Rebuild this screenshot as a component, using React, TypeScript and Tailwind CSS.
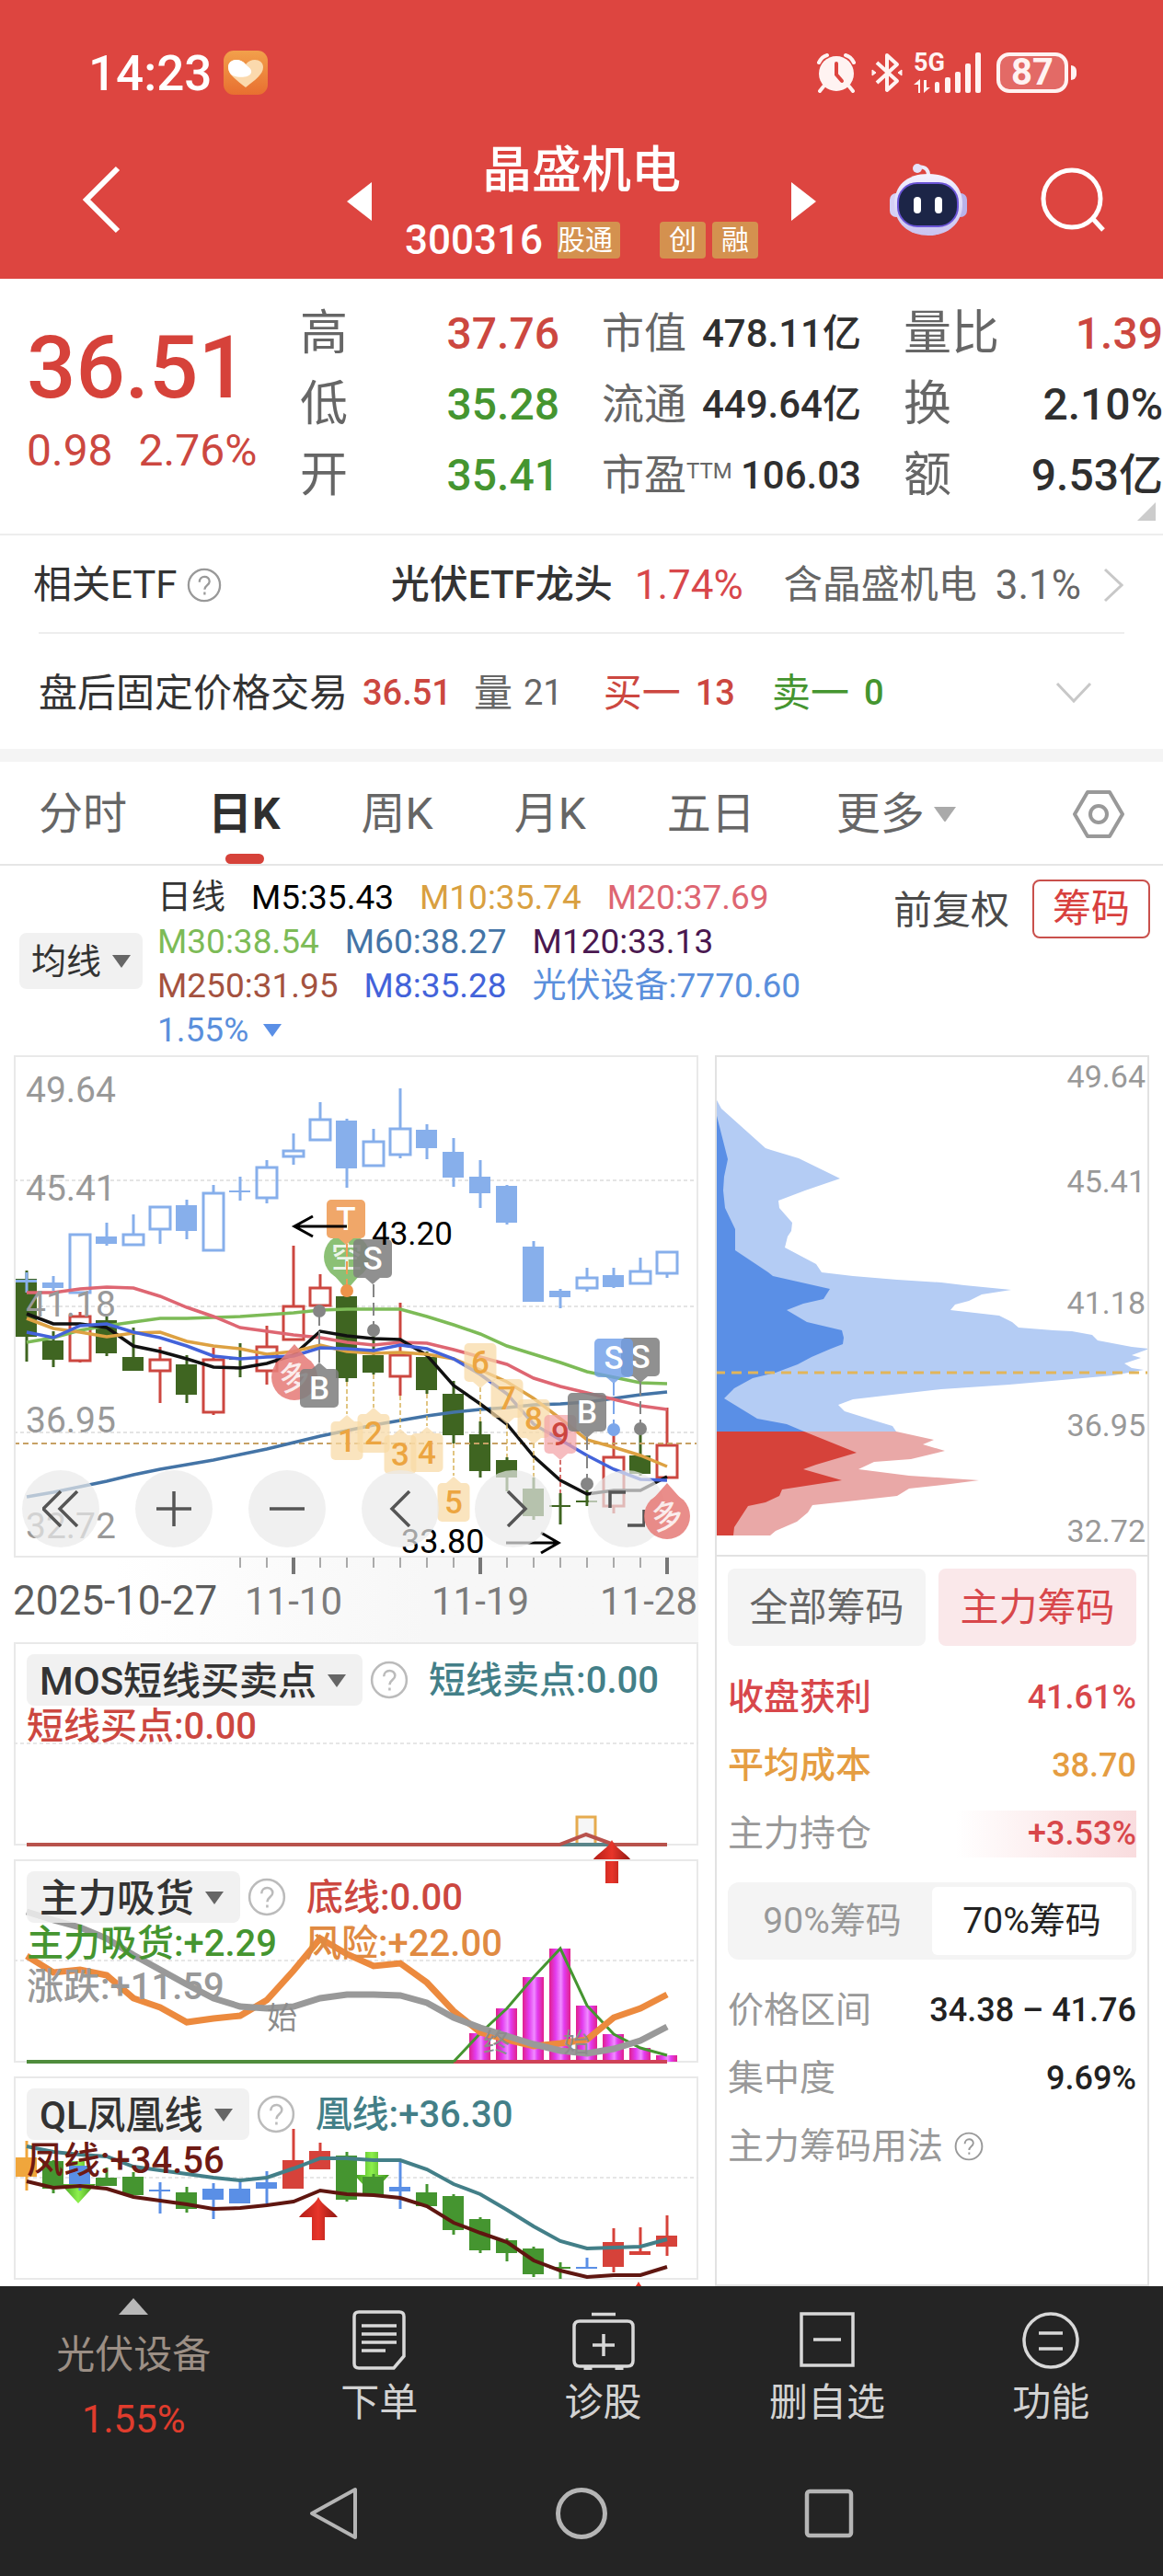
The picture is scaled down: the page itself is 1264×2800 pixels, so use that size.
import type { ReactNode } from "react";

const RED = "#cc4740";
const GREEN = "#459530";
const FONT = "Roboto, 'Noto Sans CJK SC', sans-serif";

// high, body top, body bottom, low, style
type Candle = [number, number, number, number, string];

const STEP = 29;
const xAt = (i: number) => 14 + STEP * i;
const toPoints = (ys: number[], from = 0) => ys.map((y, i) => `${xAt(i + from)},${y}`).join(" ");

const sectorCandles: Candle[] = [
  [236, 244, 247, 258, "fill"],
  [240, 247, 253, 256, "fill"],
  [195, 195, 258, 258, "open"],
  [182, 197, 205, 207, "fill"],
  [173, 195, 206, 206, "open"],
  [165, 165, 189, 205, "open"],
  [157, 163, 191, 200, "fill"],
  [141, 150, 212, 212, "open"],
  [132, 147, 149, 158, "fill"],
  [114, 122, 155, 161, "open"],
  [85, 104, 110, 119, "open"],
  [51, 70, 92, 93, "open"],
  [69, 71, 123, 144, "fill"],
  [80, 94, 120, 120, "open"],
  [36, 80, 108, 112, "open"],
  [75, 81, 101, 113, "fill"],
  [90, 105, 133, 143, "fill"],
  [114, 132, 150, 166, "fill"],
  [141, 142, 182, 184, "fill"],
  [202, 208, 268, 268, "fill"],
  [254, 256, 263, 275, "fill"],
  [231, 242, 253, 257, "open"],
  [231, 239, 252, 253, "fill"],
  [220, 235, 248, 248, "open"],
  [213, 214, 237, 242, "open"],
];

const priceCandles: Candle[] = [
  [234, 243, 306, 333, "down"],
  [300, 310, 331, 339, "down"],
  [279, 284, 332, 334, "up"],
  [284, 288, 324, 327, "down"],
  [296, 328, 343, 343, "down"],
  [317, 331, 343, 378, "up"],
  [326, 336, 369, 378, "down"],
  [318, 331, 388, 391, "up"],
  [313, 329, 331, 350, "down"],
  [294, 317, 343, 358, "up"],
  [207, 273, 309, 310, "up"],
  [238, 253, 272, 273, "up"],
  [256, 262, 351, 355, "down"],
  [299, 326, 345, 347, "down"],
  [269, 326, 349, 370, "up"],
  [322, 328, 364, 368, "down"],
  [354, 368, 413, 422, "down"],
  [398, 412, 452, 459, "down"],
  [437, 440, 459, 474, "down"],
  [459, 471, 501, 505, "down"],
  [476, 489, 491, 510, "down"],
  [467, 484, 486, 490, "down"],
  [408, 437, 490, 498, "up"],
  [406, 435, 455, 457, "down"],
  [383, 424, 459, 460, "up"],
];

const phoenixCandles: Candle[] = [
  [70, 88, 109, 124, "#f0a63c"],
  [91, 92, 122, 127, GREEN],
  [97, 97, 117, 124, "#5a8fe6"],
  [99, 110, 119, 119, GREEN],
  [104, 109, 129, 129, GREEN],
  [115, 123, 125, 149, "#5a8fe6"],
  [120, 126, 144, 148, GREEN],
  [116, 122, 134, 155, "#5a8fe6"],
  [114, 122, 138, 138, "#5a8fe6"],
  [103, 115, 122, 139, "#5a8fe6"],
  [57, 91, 122, 122, "#d6423a"],
  [72, 81, 101, 101, "#d6423a"],
  [82, 86, 134, 136, GREEN],
  [106, 109, 129, 129, GREEN],
  [91, 120, 125, 144, "#5a8fe6"],
  [117, 126, 141, 141, GREEN],
  [128, 130, 167, 172, GREEN],
  [153, 155, 189, 192, GREEN],
  [176, 178, 192, 201, GREEN],
  [185, 187, 215, 218, GREEN],
  [202, 207, 209, 220, GREEN],
  [197, 207, 209, 209, "#5a8fe6"],
  [165, 180, 207, 213, "#d6423a"],
  [164, 190, 194, 194, "#d6423a"],
  [151, 173, 185, 195, "#d6423a"],
];

const averages = [
  { color: "#4474a6", ys: [480, 475, 469, 463, 456, 450, 445, 440, 434, 428, 421, 414, 408, 402, 397, 392, 388, 385, 383, 380, 379, 377, 373, 369, 366] },
  { color: "#7dbb57", ys: [312, 307, 299, 294, 290, 286, 286, 285, 284, 282, 280, 277, 276, 276, 276, 284, 293, 303, 316, 325, 334, 344, 350, 356, 357] },
  { color: "#de6672", ys: [258, 258, 254, 252, 253, 262, 274, 284, 296, 300, 304, 307, 312, 315, 312, 313, 320, 328, 336, 351, 360, 367, 374, 381, 385] },
  { color: "#111111", ys: [281, 292, 292, 296, 316, 322, 330, 339, 340, 335, 326, 300, 305, 308, 309, 326, 359, 379, 401, 436, 462, 477, 473, 473, 458] },
  { color: "#dda142", ys: [286, 297, 301, 306, 302, 301, 311, 316, 319, 325, 322, 315, 322, 324, 323, 325, 330, 342, 355, 373, 395, 418, 426, 435, 447] },
  { color: "#4363da", ys: [301, 307, 294, 292, 301, 307, 316, 327, 330, 328, 327, 318, 319, 321, 315, 319, 330, 347, 368, 401, 418, 435, 450, 461, 462] },
];

const trend = [57, 66, 74, 86, 104, 120, 136, 151, 160, 162, 160, 151, 147, 147, 148, 156, 172, 183, 192, 201, 208, 211, 206, 197, 182];
const risk = [105, 123, 120, 126, 151, 161, 177, 173, 170, 153, 121, 86, 103, 116, 113, 134, 165, 188, 196, 203, 200, 196, 172, 162, 147];
const absorb = [189, 162, 128, 97, 159, 190, 205, 213];

const upperLine = [76, 82, 85, 87, 98, 102, 106, 110, 113, 110, 100, 89, 89, 91, 91, 101, 117, 128, 145, 163, 179, 187, 186, 185, 177];
const lowerLine = [114, 121, 119, 122, 131, 135, 139, 144, 143, 140, 136, 124, 128, 129, 132, 141, 159, 170, 180, 200, 211, 218, 216, 216, 207];

const maRows = [
  [
    { text: "日线", color: "text-[#333333]" },
    { text: "M5:35.43", color: "text-black" },
    { text: "M10:35.74", color: "text-[#d9a040]" },
    { text: "M20:37.69", color: "text-[#de6672]" },
  ],
  [
    { text: "M30:38.54", color: "text-[#7dbb57]" },
    { text: "M60:38.27", color: "text-[#4474a6]" },
    { text: "M120:33.13", color: "text-[#4a1850]" },
  ],
  [
    { text: "M250:31.95", color: "text-[#a4523f]" },
    { text: "M8:35.28", color: "text-[#4363da]" },
    { text: "光伏设备:7770.60", color: "text-[#5a8fdc]" },
  ],
];

const quotes = [
  [
    { label: "高", value: "37.76", color: "text-[#cc4740]" },
    { label: "低", value: "35.28", color: "text-[#459530]" },
    { label: "开", value: "35.41", color: "text-[#459530]" },
  ],
  [
    { label: "市值", value: "478.11亿", color: "text-[#2f2f2f]" },
    { label: "流通", value: "449.64亿", color: "text-[#2f2f2f]" },
    { label: "市盈", sup: "TTM", value: "106.03", color: "text-[#2f2f2f]" },
  ],
  [
    { label: "量比", value: "1.39", color: "text-[#cc4740]" },
    { label: "换", value: "2.10%", color: "text-[#2f2f2f]" },
    { label: "额", value: "9.53亿", color: "text-[#2f2f2f]" },
  ],
];

function Candles({ data }: { data: Candle[] }) {
  return (
    <g>
      {data.map(([high, top, bottom, low, kind], i) => {
        const x = xAt(i);
        const sector = kind === "fill" || kind === "open";
        const hollow = kind === "open" || kind === "up";
        const color = sector ? "#87afeb" : kind === "up" ? RED : kind === "down" ? "#3f6521" : kind;
        return (
          <g key={i} stroke={color} strokeWidth={3}>
            {high < top && <line x1={x} x2={x} y1={high} y2={top} />}
            {low > bottom && <line x1={x} x2={x} y1={bottom} y2={low} />}
            {hollow ? (
              <rect x={x - 11} y={top} width={22} height={bottom - top} fill="white" fillOpacity={sector ? 0 : 1} />
            ) : (
              <rect x={x - 12} y={top} width={23} height={bottom - top} fill={color} stroke="none" />
            )}
          </g>
        );
      })}
    </g>
  );
}

function Help({ className = "size-[42px] text-[#bbbbbb]" }: { className?: string }) {
  return (
    <svg viewBox="0 0 40 40" className={`shrink-0 ${className}`} fill="none" stroke="currentColor" strokeWidth={2.4}>
      <circle cx="20" cy="20" r="18" />
      <path d="M14.5 16.5c0-8 11.500-8 11.500-.8 0 4.300-5.600 4.500-5.600 9.300M20.400 28v3" />
    </svg>
  );
}

function Caret({ className = "w-5 text-[#666666]" }: { className?: string }) {
  return (
    <svg viewBox="0 0 20 14" className={`shrink-0 ${className}`} fill="currentColor">
      <path d="M0 0h20L10 14z" />
    </svg>
  );
}

// Square flag with a small pointer above or below
function Flag({ x, y, w = 42, label, fill, color = "white", up = false, size = 35 }: { x: number; y: number; w?: number; label: string; fill: string; color?: string; up?: boolean; size?: number }) {
  return (
    <g>
      <rect x={x - w / 2} y={y} width={w} height={42} rx={5} fill={fill} />
      <path d={up ? `M${x - 8} ${y}l8-7 8 7z` : `M${x - 8} ${y + 42}l8 7 8-7z`} fill={fill} />
      <text x={x} y={y + 33} fontSize={size} fontWeight={500} textAnchor="middle" fill={color}>{label}</text>
    </g>
  );
}

function Pin({ x, y, label, fill, up = false }: { x: number; y: number; label: string; fill: string; up?: boolean }) {
  return (
    <g opacity={0.88}>
      <circle cx={x} cy={y} r={25} fill={fill} />
      <path d={up ? `M${x - 15} ${y - 19}L${x} ${y - 36}l15 17z` : `M${x - 15} ${y + 19}L${x} ${y + 36}l15-17z`} fill={fill} />
      <text x={x} y={y + 12} fontSize={34} fontWeight={500} textAnchor="middle" fill="white" fillOpacity={0.85} transform={up ? `rotate(-14 ${x} ${y})` : undefined}>{label}</text>
    </g>
  );
}

function Stem({ x, from, to, dot, color }: { x: number; from: number; to: number; dot: number; color: string }) {
  return (
    <g>
      <line x1={x} x2={x} y1={from} y2={to} stroke={color} strokeWidth={2} strokeDasharray="14 6" />
      <circle cx={x} cy={dot} r={7} fill={color} />
    </g>
  );
}

function RedArrow({ x, y }: { x: number; y: number }) {
  return <path d={`M${x} ${y}c4 9 14 13 21 22h-14v25h-14v-25h-14c7-9 17-13 21-22z`} fill="url(#redArrow)" />;
}

function GreenArrow({ x, y }: { x: number; y: number }) {
  return <path d={`M${x - 7} ${y}h14v25h12L${x} ${y + 46}l-19-21h12z`} fill="url(#greenArrow)" />;
}

function ArrowDefs() {
  return (
    <defs>
      <linearGradient id="redArrow">
        <stop offset="0" stopColor="#b01c16" />
        <stop offset="0.5" stopColor="#e8352a" />
        <stop offset="1" stopColor="#8f1712" />
      </linearGradient>
      <linearGradient id="greenArrow">
        <stop offset="0" stopColor="#3c9a1c" />
        <stop offset="0.5" stopColor="#8df04c" />
        <stop offset="1" stopColor="#3a8f1b" />
      </linearGradient>
      <linearGradient id="magentaBar">
        <stop offset="0" stopColor="#e0208c" />
        <stop offset="0.3" stopColor="#e33cf0" />
        <stop offset="0.55" stopColor="#f08cff" />
        <stop offset="0.7" stopColor="#e33cf0" />
        <stop offset="1" stopColor="#e0208c" />
      </linearGradient>
    </defs>
  );
}

function StatusBar() {
  return (
    <div className="flex h-14 items-center pl-[96px] pr-[94px]">
      <span className="pt-[3px] text-[53px] font-medium">14:23</span>
      <svg viewBox="0 0 48 48" className="ml-[13px] size-12">
        <defs>
          <linearGradient id="heartBox" x2="0" y2="1">
            <stop stopColor="#f2a04b" />
            <stop offset="1" stopColor="#e86f30" />
          </linearGradient>
        </defs>
        <rect width="48" height="48" rx="11" fill="url(#heartBox)" />
        <path d="M24 40C14 32 5 26 5 18c0-9 13-11 19-3 6-8 19-6 19 3 0 8-9 14-19 22z" fill="#fbd9ad" />
        <path d="M24 15c-6-8-19-6-19 3 0 3 1 5 3 8 6 4 20 4 22-2 1-4-3-6-6-9z" fill="white" />
      </svg>
      <div className="ml-auto flex items-center">
        <svg viewBox="0 0 44 44" className="size-11">
          <g fill="none" stroke="#fff3f2" strokeWidth="4" strokeLinecap="round">
            <path d="M3 11C5 7 8 4 12 3M41 11c-2-4-5-7-9-8M8 37l-4 5M36 37l4 5" />
          </g>
          <circle cx="22" cy="23" r="19" fill="#fff3f2" />
          <path d="M22 12v12l6 7" fill="none" stroke="#dd4540" strokeWidth="4" strokeLinecap="round" />
        </svg>
        <svg viewBox="0 0 34 44" className="ml-4 w-[34px]" fill="none" stroke="#fff3f2" strokeWidth="4" strokeLinejoin="round">
          <path d="M6 11l22 20-11 10V3l11 10L6 33" />
          <path d="M1 19l4 3-4 3zM33 19l-4 3 4 3z" fill="#fff3f2" strokeWidth="1" />
        </svg>
        <svg viewBox="0 0 74 46" className="ml-3 w-[74px]" fill="#fff3f2" fontFamily={FONT}>
          <text x="0" y="21" fontSize="27" fontWeight="700">5G</text>
          <path d="M5 45V36H0l7-6v15zM11 31h3v8h4l-7 6z" />
          <rect x="23" y="33" width="5" height="12" rx="2" />
          <rect x="34" y="28" width="6" height="17" rx="2" />
          <rect x="45" y="22" width="6" height="23" rx="2" />
          <rect x="56" y="13" width="6" height="32" rx="2" />
          <rect x="67" y="1" width="6" height="44" rx="2" />
        </svg>
        <div className="ml-4 flex h-11 w-[78px] items-center justify-center rounded-[14px] border-4 border-[#fff3f2] bg-white/20 text-[40px] font-bold text-[#fff3f2]">87</div>
        <span className="ml-[3px] h-4 w-[6px] rounded-r-md bg-[#fff3f2]" />
      </div>
    </div>
  );
}

function Robot() {
  return (
    <svg viewBox="0 0 84 80" className="w-[84px]">
      <defs>
        <linearGradient id="robotShell" x2="0" y2="1">
          <stop stopColor="#f4f2ff" />
          <stop offset="1" stopColor="#c9c3f0" />
        </linearGradient>
      </defs>
      <path d="M42 16C43 6 36 2 28 6" fill="none" stroke="#eceafc" strokeWidth="4" />
      <circle cx="30" cy="6" r="5" fill="#e4e1fa" />
      <rect x="0" y="33" width="14" height="26" rx="7" fill="#d5d0f5" />
      <rect x="70" y="33" width="14" height="26" rx="7" fill="#b9b3ea" />
      <path d="M42 12c24 0 37 13 37 33S64 79 42 79 5 65 5 45s13-33 37-33z" fill="url(#robotShell)" />
      <rect x="9" y="22" width="65" height="47" rx="21" fill="#1c2547" stroke="#6a54d6" strokeWidth="2" />
      <rect x="26" y="37" width="8" height="18" rx="4" fill="white" />
      <rect x="49" y="37" width="8" height="18" rx="4" fill="white" />
    </svg>
  );
}

function Header() {
  return (
    <header className="bg-[#dd4540] pt-[51px] text-white">
      <StatusBar />
      <div className="grid h-[196px] grid-cols-[1fr_510px_1fr]">
        <div className="flex items-center pl-[89px] pt-6">
          <button aria-label="返回">
            <svg viewBox="0 0 42 74" className="w-[42px]" fill="none" stroke="white" strokeWidth="6">
              <path d="M39 3L5 37l34 34" />
            </svg>
          </button>
        </div>
        <div className="flex items-center justify-between">
          <button aria-label="上一只" className="pt-7">
            <svg viewBox="0 0 27 42" className="w-[27px]" fill="white"><path d="M27 0v42L0 21z" /></svg>
          </button>
          <div className="flex flex-col items-center">
            <h1 className="mt-7 h-[60px] text-[54px] font-medium leading-[60px]">晶盛机电</h1>
            <div className="mt-6 flex h-[42px] items-center text-[30px] leading-[40px]">
              <span className="mr-4 text-[44px] font-medium">300316</span>
              <span className="h-10 rounded-r bg-[#d4914f] pr-2">股通</span>
              <span className="ml-[43px] h-10 rounded bg-[#d4914f] px-[10px]">创</span>
              <span className="ml-[7px] h-10 rounded bg-[#d4914f] px-[10px]">融</span>
            </div>
          </div>
          <button aria-label="下一只" className="pt-7">
            <svg viewBox="0 0 27 42" className="w-[27px]" fill="white"><path d="M0 0v42l27-21z" /></svg>
          </button>
        </div>
        <div className="flex items-center justify-between pl-20 pr-[63px] pt-6">
          <button aria-label="智能助手"><Robot /></button>
          <button aria-label="搜索">
            <svg viewBox="0 0 70 70" className="w-[70px]" fill="none" stroke="white" strokeWidth="5">
              <circle cx="34" cy="34" r="31" />
              <path d="M57 56l11 12" />
            </svg>
          </button>
        </div>
      </div>
    </header>
  );
}

function Quote() {
  return (
    <section className="relative flex h-[279px] border-b-2 border-[#ededed] pl-[29px] pt-[21px]">
      <div className="w-[297px] shrink-0 pt-6 text-[#d6423a]">
        <div className="text-[94px] font-medium leading-[104px]">36.51</div>
        <div className="mt-3 flex gap-7 text-[48px] leading-[52px] text-[#cc4740]">
          <span>0.98</span>
          <span>2.76%</span>
        </div>
      </div>
      <div className="grid flex-1 grid-cols-3 gap-x-[46px]">
        {quotes.map((col, c) => (
          <dl key={c} className={c === 1 ? "text-[42px]" : "text-[48px]"}>
            {col.map((q) => (
              <div key={q.label} className="flex h-[77px] items-center justify-between whitespace-nowrap">
                <dt className={c === 1 ? "text-[46px] text-[#666666]" : "text-[52px] text-[#666666]"}>
                  {q.label}
                  {"sup" in q && <sup className="text-[24px]">{q.sup}</sup>}
                </dt>
                <dd className={`font-medium ${q.color}`}>{q.value}</dd>
              </div>
            ))}
          </dl>
        ))}
      </div>
      <svg viewBox="0 0 20 20" className="absolute bottom-[14px] right-2 w-5" fill="#cccccc"><path d="M20 0v20H0z" /></svg>
    </section>
  );
}

function Links() {
  return (
    <section className="text-[42px]">
      <a href="#etf" className="flex h-[105px] items-center whitespace-nowrap pl-[36px] pr-[43px] pt-[2px] text-[#333333]">
        相关ETF
        <Help className="ml-[10px] size-[38px] text-[#999999]" />
        <span className="ml-auto font-medium">光伏ETF龙头</span>
        <span className="ml-6 text-[44px] text-[#d8474b]">1.74%</span>
        <span className="ml-11 text-[#666666]">含晶盛机电</span>
        <span className="ml-5 text-[44px] text-[#666666]">3.1%</span>
        <svg viewBox="0 0 22 38" className="ml-6 w-[22px]" fill="none" stroke="#c8c8c8" strokeWidth="3"><path d="M2 2l18 17L2 36" /></svg>
      </a>
      <div className="mx-[42px] border-t-2 border-[#ededed]" />
      <button className="flex h-[125px] w-full items-center whitespace-nowrap pl-[42px] pr-[77px] pt-[3px] text-[#333333]">
        盘后固定价格交易
        <span className="ml-4 text-[38px] font-medium text-[#cc4740]">36.51</span>
        <span className="ml-6 text-[#666666]">量</span>
        <span className="ml-3 text-[38px] text-[#666666]">21</span>
        <span className="ml-11 text-[#cc4740]">买一</span>
        <span className="ml-4 text-[38px] font-medium text-[#cc4740]">13</span>
        <span className="ml-10 text-[#459530]">卖一</span>
        <span className="ml-4 text-[38px] font-medium text-[#459530]">0</span>
        <svg viewBox="0 0 40 24" className="ml-auto w-10" fill="none" stroke="#c8c8c8" strokeWidth="3"><path d="M2 2l18 19L38 2" /></svg>
      </button>
      <div className="h-[14px] bg-[#f4f4f4]" />
    </section>
  );
}

function Tabs() {
  return (
    <nav className="flex h-[113px] items-stretch border-b-2 border-[#e6e6e6] pl-[42px] pr-[42px] pt-[3px] text-[48px] text-[#666666]">
      <div className="flex gap-[88px]">
        <button>分时</button>
        <button className="relative font-bold text-[#2f2f2f]">
          日K
          <span className="absolute bottom-0 left-[19px] h-[11px] w-[42px] rounded-md bg-[#d6423a]" />
        </button>
        <button>周K</button>
        <button>月K</button>
        <button>五日</button>
        <button className="flex items-center gap-[10px]">更多<Caret className="w-6 text-[#aaaaaa]" /></button>
      </div>
      <button className="ml-auto" aria-label="设置">
        <svg viewBox="0 0 56 54" className="w-14" fill="none" stroke="#999999" strokeWidth="4" strokeLinejoin="round">
          <path d="M16 3h24l14 24-14 24H16L2 27z" />
          <circle cx="28" cy="27" r="9" />
        </svg>
      </button>
    </nav>
  );
}

function Averages() {
  return (
    <section className="flex h-[206px] pt-[11px] text-[37px] leading-[48px]">
      <label className="ml-[21px] mt-[62px] flex h-[61px] shrink-0 items-center gap-3 rounded-lg bg-[#f1f1f1] px-[13px] text-[38px] text-[#333333]">
        <select aria-label="主图指标" className="field-sizing-content appearance-none">
          <option>均线</option>
        </select>
        <Caret />
      </label>
      <div className="ml-4 flex-1 whitespace-nowrap">
        {maRows.map((row, r) => (
          <div key={r} className="flex gap-7">
            {row.map((m) => <span key={m.text} className={m.color}>{m.text}</span>)}
          </div>
        ))}
        <div className="flex items-center gap-4 text-[#5a8fdc]">1.55%<Caret className="w-5 text-[#5a8fe6]" /></div>
      </div>
      <div className="mr-[14px] mt-1 flex items-start gap-[25px] text-[42px]">
        <button className="leading-[68px] text-[#4a4a4a]">前复权</button>
        <button className="h-[64px] rounded-lg border-2 border-[#c9504c] px-5 leading-[60px] text-[#d8403e]">筹码</button>
      </div>
    </section>
  );
}

function ZoomButton({ label, children }: { label: string; children: ReactNode }) {
  return (
    <button aria-label={label} className="flex size-[84px] items-center justify-center rounded-full bg-[#e9e9e9]/70">
      <svg viewBox="0 0 40 40" className="size-10" fill="none" stroke="#555555" strokeWidth="3.5">{children}</svg>
    </button>
  );
}

const counts = [
  { n: "1", x: 362, y: 398, up: true, from: 355, to: 390 },
  { n: "2", x: 391, y: 390, up: true, from: 347, to: 383 },
  { n: "3", x: 420, y: 413, up: true, from: 370, to: 405 },
  { n: "4", x: 449, y: 411, up: true, from: 368, to: 403 },
  { n: "5", x: 478, y: 465, up: true, from: 422, to: 457 },
  { n: "6", x: 507, y: 313, up: false, from: 361, to: 398 },
  { n: "7", x: 536, y: 352, up: false, from: 401, to: 437 },
  { n: "8", x: 565, y: 374, up: false, from: 422, to: 459 },
  { n: "9", x: 594, y: 391, up: false, from: 440, to: 476 },
];

function PriceChart() {
  return (
    <div className="relative outline-2 -outline-offset-2 outline-[#e9e9e9]">
      <svg viewBox="0 0 744 546" className="w-full overflow-visible" fontFamily={FONT}>
        <g stroke="#dcdcdc" strokeWidth="1.500" strokeDasharray="4 3">
          <line x1="0" x2="744" y1="136" y2="136" />
          <line x1="0" x2="744" y1="273" y2="273" />
          <line x1="0" x2="744" y1="410" y2="410" />
        </g>
        <Candles data={priceCandles} />
        <Candles data={sectorCandles} />
        <line x1="0" x2="744" y1="422" y2="422" stroke="#c7a165" strokeWidth="2" strokeDasharray="6 4" />
        {averages.map((a) => (
          <polyline key={a.color} points={toPoints(a.ys)} fill="none" stroke={a.color} strokeWidth="3.500" />
        ))}
        <g fontSize="39" fill="#999999">
          <text x="13" y="51">49.64</text>
          <text x="13" y="158">45.41</text>
          <text x="13" y="284">41.18</text>
          <text x="13" y="410">36.95</text>
          <text x="13" y="525">32.72</text>
        </g>

        {counts.map((c) => (
          <g key={c.n}>
            <line x1={c.x} x2={c.x} y1={c.from} y2={c.to} stroke={c.n === "9" ? "#c9443f" : "#d8b25a"} strokeWidth="1.500" strokeDasharray="5 3" />
            <Flag x={c.x} y={c.y} w={35} up={c.up} label={c.n} fill={c.n === "9" ? "#f2a2a6b8" : "#f8d9a5b8"} color={c.n === "9" ? "#cc453f" : "#eca541"} />
          </g>
        ))}

        <Pin x={362} y={219} label="空" fill="#7cb862" />
        <line x1="362" x2="362" y1="205" y2="262" stroke="#ef9a55" strokeWidth="2" strokeDasharray="14 5" />
        <circle cx="362" cy="256" r="7" fill="#ee934a" />
        <Flag x={361} y={157} label="T" fill="#f0a769" />
        <Stem x={391} from={249} to={300} dot={299} color="#858585" />
        <Flag x={390} y={200} label="S" fill="#7f7f7fdd" />
        <text x="389" y="206" fontSize="35">43.20</text>
        <path d="M362 186h-57M325 175l-20 11 20 11" fill="none" stroke="black" strokeWidth="3" />

        <Pin x={305} y={350} label="多" fill="#e77e7a" up />
        <Stem x={332} from={280} to={335} dot={278} color="#858585" />
        <Flag x={332} y={341} label="B" fill="#7f7f7fdd" up />

        <Stem x={652} from={356} to={408} dot={407} color="#7ba6ea" />
        <Stem x={681} from={356} to={408} dot={406} color="#858585" />
        <Stem x={623} from={415} to={466} dot={466} color="#858585" />
        <Flag x={623} y={367} label="B" fill="#7f7f7fdd" />
        <Flag x={681} y={307} label="S" fill="#7f7f7fdd" />
        <Flag x={652} y={308} label="S" fill="#6f9ee8d0" />

        <text x="421" y="541" fontSize="36">33.80</text>
        <path d="M535 530h56M573 519l19 11-19 11" fill="none" stroke="black" strokeWidth="3" />
      </svg>
      <div className="absolute inset-x-[9px] bottom-[11px] flex gap-[39px]">
        <ZoomButton label="展开"><path d="M20 1L1 20l19 19M38 1L19 20l19 19" /></ZoomButton>
        <ZoomButton label="放大"><path d="M20 1v38M1 20h38" /></ZoomButton>
        <ZoomButton label="缩小"><path d="M1 20h38" /></ZoomButton>
        <ZoomButton label="左移"><path d="M30 1L11 20l19 19" /></ZoomButton>
        <ZoomButton label="右移"><path d="M14 1l19 19-19 19" /></ZoomButton>
        <ZoomButton label="全屏"><path d="M2 19V2h17M39 21v17H21" /></ZoomButton>
      </div>
      <svg viewBox="0 0 744 546" className="pointer-events-none absolute inset-0 w-full overflow-visible" fontFamily={FONT}>
        <Pin x={710} y={501} label="多" fill="#e77e7a" up />
      </svg>
    </div>
  );
}

function DateAxis() {
  return (
    <svg viewBox="0 0 744 92" className="w-full bg-linear-to-r from-white from-15% to-[#f7f7f7] to-60%" fontFamily={FONT}>
      {Array.from({ length: 17 }, (_, k) => k + 8).map((i) => {
        const major = i === 10 || i === 17 || i === 24;
        return <line key={i} x1={xAt(i)} x2={xAt(i)} y1="0" y2={major ? 18 : 11} stroke={major ? "#777777" : "#aaaaaa"} strokeWidth={major ? 4 : 2} />;
      })}
      <g fontSize="42" fill="#7c7c7c">
        <text x="-1" y="62" fontSize="44" fill="#5c5c5c">2025-10-27</text>
        <text x="304" y="62" textAnchor="middle">11-10</text>
        <text x="507" y="62" textAnchor="middle">11-19</text>
        <text x="743" y="62" textAnchor="end">11-28</text>
      </g>
    </svg>
  );
}

interface IndicatorProps {
  name: string;
  first: string;
  firstColor: string;
  rest: { text: string; color: string }[][];
  children: ReactNode;
}

function Indicator({ name, first, firstColor, rest, children }: IndicatorProps) {
  return (
    <section className="relative aspect-[744/221] outline-2 -outline-offset-2 outline-[#e9e9e9]">
      <svg viewBox="0 0 744 221" className="absolute inset-0 w-full overflow-visible" fontFamily={FONT}>
        <line x1="0" x2="744" y1="110" y2="110" stroke="#e6e6e6" strokeWidth="2" strokeDasharray="4 3" />
        {children}
      </svg>
      <div className="relative whitespace-nowrap px-[14px] pt-[13px] text-[40px] font-medium">
        <div className="flex h-14 items-center">
          <label className="flex h-14 items-center gap-3 rounded-lg bg-[#efefef]/85 pl-[14px] pr-[18px] pt-[2px] text-[42px] text-[#333333]">
            <select aria-label="副图指标" className="field-sizing-content appearance-none">
              <option>{name}</option>
            </select>
            <Caret />
          </label>
          <button className="ml-2" aria-label={`${name}说明`}><Help /></button>
          <span className={`ml-[22px] pt-[2px] ${firstColor}`}>{first}</span>
        </div>
        {rest.map((row, r) => (
          <div key={r} className="-mt-px flex gap-[30px] leading-[48px]">
            {row.map((v) => <span key={v.text} className={v.color}>{v.text}</span>)}
          </div>
        ))}
      </div>
    </section>
  );
}

function Indicators() {
  return (
    <div className="flex flex-col gap-[15px]">
      <Indicator
        name="MOS短线买卖点"
        first="短线卖点:0.00"
        firstColor="text-[#437f88]"
        rest={[[{ text: "短线买点:0.00", color: "text-[#cc4740]" }]]}
      >
        <ArrowDefs />
        <rect x="612" y="190" width="20" height="30" fill="#f6f6f6" stroke="#e6ab4f" strokeWidth="3" />
        <line x1="593" x2="652" y1="220" y2="220" stroke="#5a8589" strokeWidth="4" />
        <polyline points="14,220 593,220 622,209 652,220 710,220" fill="none" stroke="#b8524c" strokeWidth="4" />
        <RedArrow x={650} y={215} />
      </Indicator>

      <Indicator
        name="主力吸货"
        first="底线:0.00"
        firstColor="text-[#cc4740]"
        rest={[
          [{ text: "主力吸货:+2.29", color: "text-[#459530]" }, { text: "风险:+22.00", color: "text-[#e08a42]" }],
          [{ text: "涨跌:+11.59", color: "text-[#999999]" }],
        ]}
      >
        {absorb.map((y, i) => (
          <rect key={i} x={xAt(i + 17) - 12} y={y} width="23" height={220 - y} fill="url(#magentaBar)" />
        ))}
        <line x1="478" x2="710" y1="220" y2="220" stroke="#cf4257" strokeWidth="4" />
        <line x1="14" x2="478" y1="220" y2="220" stroke="#4f8c3c" strokeWidth="4" />
        <polyline points={toPoints([220, ...absorb], 16)} fill="none" stroke="#459530" strokeWidth="3" />
        <polyline points={toPoints(risk)} fill="none" stroke="#ec8a3e" strokeWidth="7" />
        <polyline points={toPoints(trend)} fill="none" stroke="#999999" strokeWidth="7" />
        <g fill="#8c8c8c">
          <text x="275" y="184" fontSize="33">始</text>
          <text x="510" y="210" fontSize="29">终</text>
          <text x="597" y="210" fontSize="29">始</text>
        </g>
      </Indicator>

      <Indicator
        name="QL凤凰线"
        first="凰线:+36.30"
        firstColor="text-[#437f88]"
        rest={[[{ text: "凤线:+34.56", color: "text-[#6e1a14]" }]]}
      >
        <GreenArrow x={70} y={92} />
        <GreenArrow x={389} y={82} />
        <Candles data={phoenixCandles} />
        <polyline points={toPoints(upperLine)} fill="none" stroke="#437f88" strokeWidth="4" />
        <polyline points={toPoints(lowerLine)} fill="none" stroke="#5f1610" strokeWidth="4" />
        <RedArrow x={331} y={131} />
        <RedArrow x={679} y={223} />
      </Indicator>
    </div>
  );
}

function ChipsChart() {
  return (
    <svg viewBox="0 0 472 543" className="w-full border-b-2 border-[#e2e2e2]" fontFamily={FONT}>
      <path fill="#b4ccf4" d="M0 45L7 58 55 101 61 103 91 112 136 134 98 147 69 158 70 166 84 182 83 191 79 197 76 209 110 227 116 236 150 240 198 244 246 247 271 250 322 255 290 260 276 267 261 271 256 277 309 283 323 290 330 296 368 299 388 300 410 304 416 310 453 317 472 319 453 326 463 329 445 335 453 340 466 342 433 348 366 354 320 358 246 363 193 369 150 374 134 380 141 387 173 397 193 403 197 409H0z" />
      <path fill="#5a8fe6" d="M0 58L14 113 10 132 9 147 11 166 22 189 22 212 58 236 63 240 94 247 125 254 118 265 96 270 78 277 100 290 138 299 140 307 139 314 126 319 105 328 90 336 66 345 41 351 21 362 10 373 46 395 78 401 97 409H0z" />
      <path fill="#e9a8a7" d="M0 409H197L238 418 226 423 250 430 213 439 173 442 156 450 211 457 256 460 287 462 256 466 211 471 198 479 153 484 106 489 101 497 89 507 66 517 60 522H0z" />
      <path fill="#d6423a" d="M0 409H97L154 432 110 445 96 450 138 462 73 472 70 479 55 486 36 490 21 513 20 522H0z" />
      <line x1="0" x2="472" y1="345" y2="345" stroke="#e2b559" strokeWidth="3" strokeDasharray="11 7" />
      <g fontSize="34" fill="#999999" textAnchor="end">
        <text x="468" y="35">49.64</text>
        <text x="468" y="149">45.41</text>
        <text x="468" y="281">41.18</text>
        <text x="468" y="414">36.95</text>
        <text x="468" y="529">32.72</text>
      </g>
    </svg>
  );
}

function ChipsPanel() {
  return (
    <aside className="outline-2 -outline-offset-2 outline-[#e2e2e2]">
      <ChipsChart />
      <div className="px-[14px] pt-[13px] text-[39px] text-[#999999]">
        <div className="grid grid-cols-2 gap-[14px] text-[42px]">
          <button className="h-[84px] rounded-lg bg-[#f4f4f4] text-[#666666]">全部筹码</button>
          <button className="h-[84px] rounded-lg bg-[#fae8ea] text-[#d8474b]">主力筹码</button>
        </div>
        <dl className="mt-[19px] font-medium">
          <div className="flex h-[74px] items-center justify-between text-[#d8474b]"><dt>收盘获利</dt><dd className="text-[36px]">41.61%</dd></div>
          <div className="flex h-[74px] items-center justify-between text-[#e59d42]"><dt>平均成本</dt><dd className="text-[36px]">38.70</dd></div>
          <div className="flex h-[74px] items-center justify-between">
            <dt className="font-normal">主力持仓</dt>
            <dd className="h-[51px] w-[196px] bg-linear-to-r from-white to-[#f9dcde] text-right text-[36px] leading-[51px] text-[#d8474b]">+3.53%</dd>
          </div>
        </dl>
        <div className="mt-4 grid h-[84px] grid-cols-2 rounded-xl bg-[#f4f4f4] p-[5px]">
          <button>90%筹码</button>
          <button className="rounded-md bg-white text-[#222222]">70%筹码</button>
        </div>
        <dl className="mt-[18px]">
          <div className="flex h-[74px] items-center justify-between"><dt>价格区间</dt><dd className="text-[36px] font-medium text-[#222222]">34.38 – 41.76</dd></div>
          <div className="flex h-[74px] items-center justify-between"><dt>集中度</dt><dd className="text-[36px] font-medium text-[#222222]">9.69%</dd></div>
        </dl>
        <a href="#usage" className="flex h-[74px] items-center gap-3">主力筹码用法<Help className="size-8 text-[#999999]" /></a>
      </div>
    </aside>
  );
}

function NavItem({ label, children }: { label: string; children: ReactNode }) {
  return (
    <button className="flex flex-col items-center pt-6 text-[#d2d2d2]">
      <svg viewBox="0 0 68 68" className="size-[68px]" fill="none" stroke="#d8d8d8" strokeWidth="3.500">{children}</svg>
      <span className="mt-[5px] leading-[60px]">{label}</span>
    </button>
  );
}

function BottomBar() {
  return (
    <footer className="bg-[#242424]">
      <nav className="grid h-[180px] grid-cols-[290fr_243fr_243fr_243fr_243fr] text-[42px]">
        <button className="flex flex-col items-center pt-[13px] text-[#9c8f85]">
          <svg viewBox="0 0 32 18" className="w-8" fill="#b8b8b8"><path d="M16 0l16 18H0z" /></svg>
          <span className="mt-3 leading-[64px]">光伏设备</span>
          <span className="mt-[6px] leading-[64px] text-[#e03c2d]">1.55%</span>
        </button>
        <NavItem label="下单">
          <path d="M12 4h44q5 0 5 5v43L50 65H12q-5 0-5-5V9q0-5 5-5zM15 19h38M15 28h38M15 37h38M15 46h26" />
        </NavItem>
        <NavItem label="诊股">
          <path d="M8 14h52q6 0 6 6v37q0 6-6 6H8q-6 0-6-6V20q0-6 6-6zM21 6.500h26M34 28v24M22 40h24" />
          <path d="M17 62v5M51 62v5" strokeWidth="9" />
        </NavItem>
        <NavItem label="删自选">
          <path d="M6 6h56v56H6zM19 34h30" />
        </NavItem>
        <NavItem label="功能">
          <circle cx="34" cy="35" r="29" />
          <path d="M21 27h26M21 44h26" />
        </NavItem>
      </nav>
      <div className="flex h-[135px] items-start justify-center gap-[213px] pt-[38px]">
        <button aria-label="返回上一页">
          <svg viewBox="0 0 56 58" className="w-14" fill="none" stroke="#b5b5b5" strokeWidth="4" strokeLinejoin="round"><path d="M51 3v52L4 29z" /></svg>
        </button>
        <button aria-label="主屏幕">
          <svg viewBox="0 0 56 58" className="w-14" fill="none" stroke="#b5b5b5" strokeWidth="5"><circle cx="28" cy="29" r="25.500" /></svg>
        </button>
        <button aria-label="最近任务">
          <svg viewBox="0 0 56 58" className="w-14" fill="none" stroke="#b5b5b5" strokeWidth="4.500"><rect x="4" y="5" width="48" height="48" rx="3" /></svg>
        </button>
      </div>
    </footer>
  );
}

export default function App() {
  return (
    <div className="min-h-screen bg-white font-[Roboto,'Noto_Sans_CJK_SC',sans-serif]">
      <Header />
      <Quote />
      <Links />
      <Tabs />
      <Averages />
      <main className="grid grid-cols-[744fr_472fr] gap-[18px] overflow-hidden px-[15px]">
        <div className="pb-[7px]">
          <PriceChart />
          <DateAxis />
          <Indicators />
        </div>
        <ChipsPanel />
      </main>
      <BottomBar />
    </div>
  );
}
